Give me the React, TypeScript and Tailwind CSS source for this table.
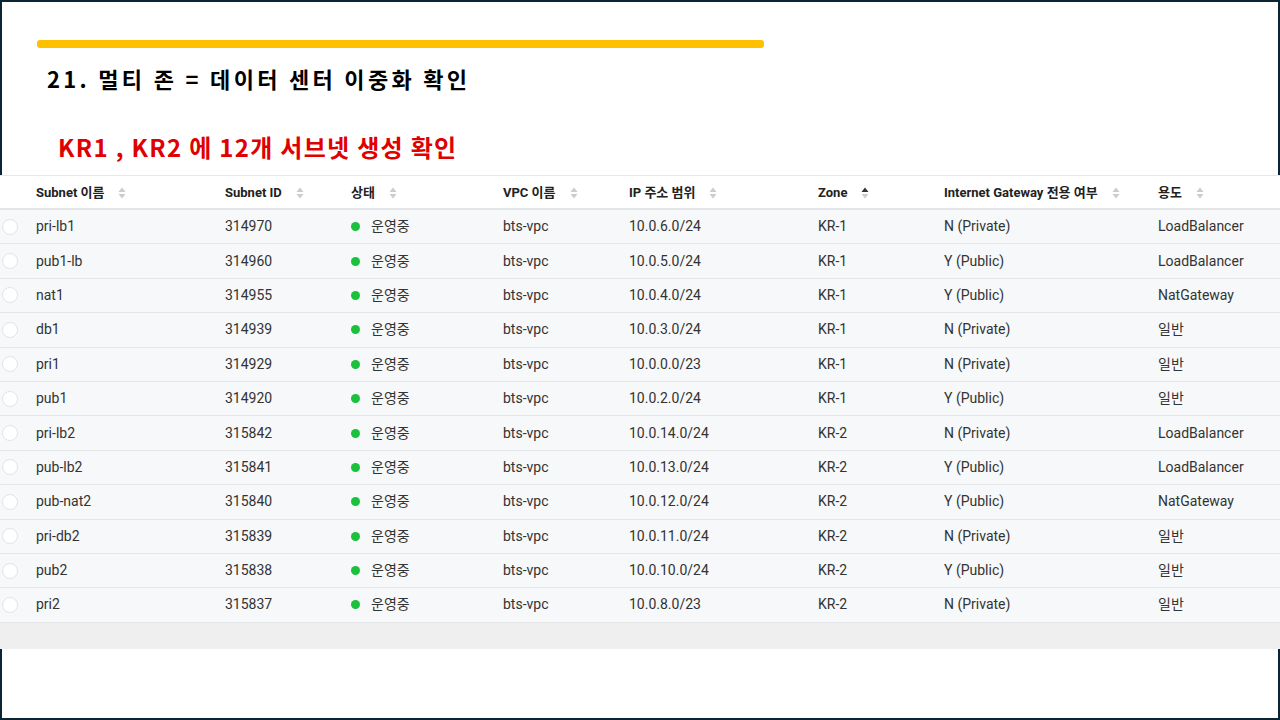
import React from 'react';

type Row = {
  name: string;
  id: string;
  ip: string;
  zone: string;
  igw: string;
  usage: string;
};

const rows: Row[] = [
  { name: 'pri-lb1', id: '314970', ip: '10.0.6.0/24', zone: 'KR-1', igw: 'N (Private)', usage: 'LoadBalancer' },
  { name: 'pub1-lb', id: '314960', ip: '10.0.5.0/24', zone: 'KR-1', igw: 'Y (Public)', usage: 'LoadBalancer' },
  { name: 'nat1', id: '314955', ip: '10.0.4.0/24', zone: 'KR-1', igw: 'Y (Public)', usage: 'NatGateway' },
  { name: 'db1', id: '314939', ip: '10.0.3.0/24', zone: 'KR-1', igw: 'N (Private)', usage: '일반' },
  { name: 'pri1', id: '314929', ip: '10.0.0.0/23', zone: 'KR-1', igw: 'N (Private)', usage: '일반' },
  { name: 'pub1', id: '314920', ip: '10.0.2.0/24', zone: 'KR-1', igw: 'Y (Public)', usage: '일반' },
  { name: 'pri-lb2', id: '315842', ip: '10.0.14.0/24', zone: 'KR-2', igw: 'N (Private)', usage: 'LoadBalancer' },
  { name: 'pub-lb2', id: '315841', ip: '10.0.13.0/24', zone: 'KR-2', igw: 'Y (Public)', usage: 'LoadBalancer' },
  { name: 'pub-nat2', id: '315840', ip: '10.0.12.0/24', zone: 'KR-2', igw: 'Y (Public)', usage: 'NatGateway' },
  { name: 'pri-db2', id: '315839', ip: '10.0.11.0/24', zone: 'KR-2', igw: 'N (Private)', usage: '일반' },
  { name: 'pub2', id: '315838', ip: '10.0.10.0/24', zone: 'KR-2', igw: 'Y (Public)', usage: '일반' },
  { name: 'pri2', id: '315837', ip: '10.0.8.0/23', zone: 'KR-2', igw: 'N (Private)', usage: '일반' },
];

const headers = ['Subnet 이름', 'Subnet ID', '상태', 'VPC 이름', 'IP 주소 범위', 'Zone', 'Internet Gateway 전용 여부', '용도'];

const cols = 'grid grid-cols-[36px_189px_126px_152px_126px_189px_126px_214px_1fr]';

// up/down sort arrows; Zone column is sorted ascending
const SortIcon = ({ active }: { active?: boolean }) => (
  <svg width="8" height="12" viewBox="0 0 8 12" className="ml-[14px] shrink-0">
    <path d="M4 0.5 L7.5 5 L0.5 5 Z" fill={active ? '#333333' : '#c9ccd0'} />
    <path d="M4 11.5 L7.5 7 L0.5 7 Z" fill="#c9ccd0" />
  </svg>
);

export default function App() {
  return (
    <div className="w-[1280px] h-[720px] border-2 border-[#0b2536] bg-white flex flex-col font-['Noto_Sans_CJK_KR',sans-serif]">
      {/* Slide header */}
      <div className="ml-[35px] mt-[38px] w-[727px] h-[8px] rounded-[3px] bg-[#ffc000]" />
      <h1 className="ml-[45px] mt-[15px] h-[30px] leading-[30px] text-[22px] font-bold text-black tracking-[3.3px]">
        21. 멀티 존 = 데이터 센터 이중화 확인
      </h1>
      <h2 className="ml-[56px] mt-[38px] h-[32px] leading-[32px] text-[24px] font-bold text-[#e00000] tracking-[1.3px]">
        KR1 , KR2 에 12개 서브넷 생성 확인
      </h2>

      {/* Subnet table (screenshot) */}
      <div className="-mx-[2px] mt-[12px] font-['Roboto','Noto_Sans_CJK_KR',sans-serif] text-[14px] text-[#333]">
        <div className={`${cols} h-[35px] pt-[2px] items-center bg-white border-t border-[#e8e8e8] border-b-2 border-b-[#e3e5e8]`}>
          <div />
          {headers.map((h, i) => (
            <div key={h} className="flex items-center text-[13px] font-bold text-[#222]">
              <span>{h}</span>
              <SortIcon active={i === 5} />
            </div>
          ))}
        </div>
        {rows.map(r => (
          <div key={r.id} className={`${cols} h-[34.4px] items-center bg-[#f7f8f9] border-b border-[#e4e6e8]`}>
            <div className="flex items-center pl-[2px]">
              <span className="w-[16px] h-[16px] shrink-0 rounded-full bg-white border border-[#e2e4e6]" />
            </div>
            <div>{r.name}</div>
            <div>{r.id}</div>
            <div className="flex items-center">
              <span className="w-[9px] h-[9px] rounded-full bg-[#19c13c]" />
              <span className="ml-[11px]">운영중</span>
            </div>
            <div>bts-vpc</div>
            <div>{r.ip}</div>
            <div>{r.zone}</div>
            <div>{r.igw}</div>
            <div>{r.usage}</div>
          </div>
        ))}
        <div className="h-[26px] bg-[#efefef]" />
      </div>
    </div>
  );
}
